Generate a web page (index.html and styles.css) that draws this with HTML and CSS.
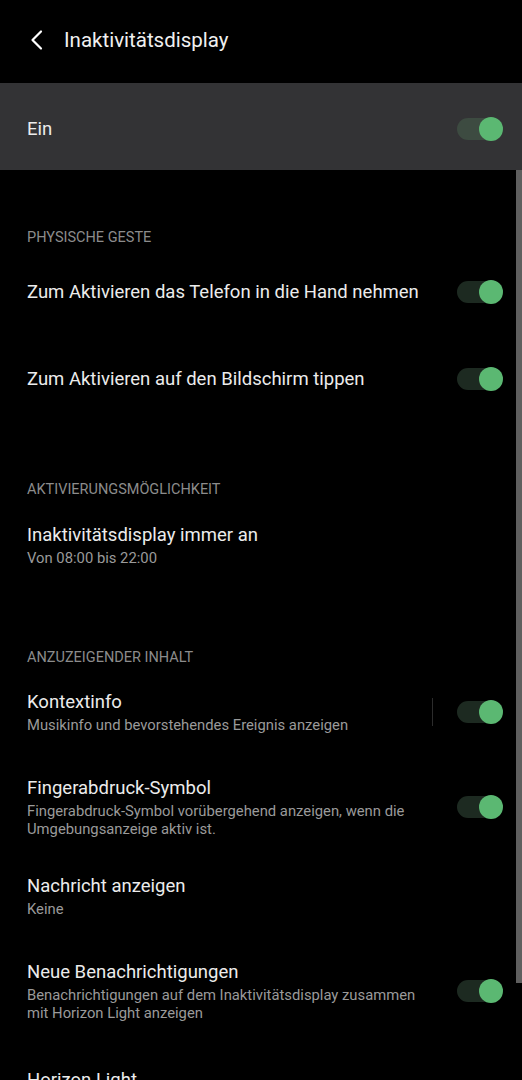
FILE: index.html
```html
<!DOCTYPE html>
<html>
<head>
	<meta charset="utf-8">
	<title>Inaktivitätsdisplay</title>
	<meta name="viewport" content="width=device-width, initial-scale=1.0">
	<link rel="stylesheet" href="styles.css">
</head>
<body>
	<div class = "header">
		<svg class = "back" width="24" height="24" viewBox="0 0 24 24">
			<path d="M16 3.5 L7.5 12 L16 20.5" fill="none" stroke="#ffffff" stroke-width="2.2" stroke-linecap="round" stroke-linejoin="round"/>
		</svg>
		<h1>Inaktivitätsdisplay</h1>
	</div>

	<div class = "item master">
		<div class = "text"><p class = "title">Ein</p></div>
		<span class = "toggle"></span>
	</div>

	<p class = "section">PHYSISCHE GESTE</p>
	<div class = "item">
		<div class = "text"><p class = "title">Zum Aktivieren das Telefon in die Hand nehmen</p></div>
		<span class = "toggle"></span>
	</div>
	<div class = "item">
		<div class = "text"><p class = "title">Zum Aktivieren auf den Bildschirm tippen</p></div>
		<span class = "toggle"></span>
	</div>

	<p class = "section">AKTIVIERUNGSMÖGLICHKEIT</p>
	<div class = "item wide">
		<div class = "text">
			<p class = "title">Inaktivitätsdisplay immer an</p>
			<p class = "sub">Von 08:00 bis 22:00</p>
		</div>
	</div>

	<p class = "section">ANZUZEIGENDER INHALT</p>
	<div class = "item">
		<div class = "text">
			<p class = "title">Kontextinfo</p>
			<p class = "sub">Musikinfo und bevorstehendes Ereignis anzeigen</p>
		</div>
		<span class = "divider"></span>
		<span class = "toggle"></span>
	</div>
	<div class = "item multi">
		<div class = "text">
			<p class = "title">Fingerabdruck-Symbol</p>
			<p class = "sub">Fingerabdruck-Symbol vorübergehend anzeigen, wenn die Umgebungsanzeige aktiv ist.</p>
		</div>
		<span class = "toggle"></span>
	</div>
	<div class = "item">
		<div class = "text">
			<p class = "title">Nachricht anzeigen</p>
			<p class = "sub">Keine</p>
		</div>
	</div>
	<div class = "item multi">
		<div class = "text">
			<p class = "title">Neue Benachrichtigungen</p>
			<p class = "sub">Benachrichtigungen auf dem Inaktivitätsdisplay zusammen mit Horizon Light anzeigen</p>
		</div>
		<span class = "toggle"></span>
	</div>
	<div class = "item">
		<div class = "text"><p class = "title">Horizon Light</p></div>
	</div>

	<div class = "scrollbar"></div>
</body>
</html>
```

FILE: styles.css
```css
*{
	margin:0;
	padding:0;
	box-sizing:border-box;
	font-family:Roboto, "Noto Sans", sans-serif;
}

body{
	background:#000;
	color:#ececec;
	width:522px;
	height:1080px;
	overflow:hidden;
}

.header{
	height:83px;
	display:flex;
	align-items:center;
	padding:0 0 4px 25px;
}

.header .back{
	flex:none;
}

.header h1{
	font-size:20.5px;
	font-weight:400;
	margin-left:15px;
	color:#f0f0f0;
}

.item{
	display:flex;
	align-items:center;
	min-height:87px;
	padding:17px 21px 17px 27px;
}

.item.master{
	background:#333335;
	padding-top:19px;
	padding-bottom:15px;
}

.item.wide{
	min-height:90px;
}

.item.multi{
	padding-top:21px;
	padding-bottom:14px;
}

.item .text{
	width:403px;
	flex:none;
}

.title{
	font-size:18.5px;
	line-height:24px;
	color:#ececec;
}

.sub{
	font-size:14.8px;
	line-height:18px;
	margin-top:2px;
	color:#9a9a9a;
}

.section{
	font-size:14.5px;
	line-height:18px;
	color:#8c8c8c;
	padding:59px 27px 1px;
}

.divider{
	width:1px;
	height:28px;
	background:#2c2c2c;
	margin-left:2px;
}

.toggle{
	position:relative;
	width:44px;
	height:22px;
	border-radius:11px;
	background:#1d2a21;
	margin-left:auto;
	flex:none;
}

.master .toggle{
	background:#3d4b41;
}

.toggle::after{
	content:"";
	position:absolute;
	right:-2px;
	top:-1px;
	width:24px;
	height:24px;
	border-radius:50%;
	background:#5bb872;
}

.scrollbar{
	position:fixed;
	right:0;
	top:170px;
	width:6px;
	height:813px;
	background:#5f5f5f;
}
```
